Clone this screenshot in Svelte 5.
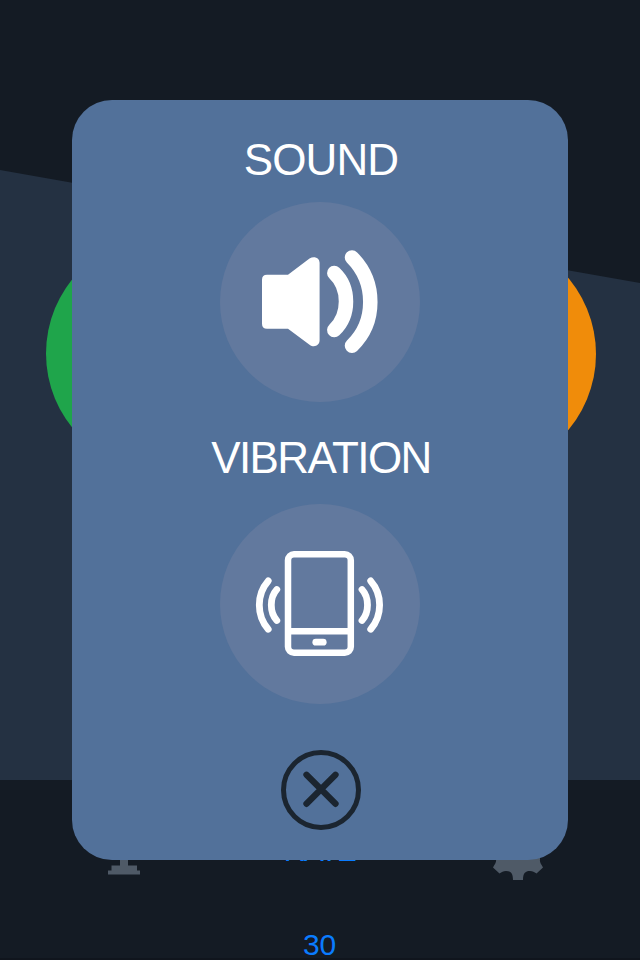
<script>
  let sound = $state(true);
  let vibration = $state(true);
  let score = 30;
</script>

<main class="screen">
  <svg class="scene" viewBox="0 0 640 960" aria-hidden="true">
    <path d="M0 170 L640 283 V780 H0 Z" fill="#243142" />
    <circle cx="164" cy="353.5" r="118" fill="#1fa54b" />
    <circle cx="477.5" cy="354" r="118.5" fill="#f08c0a" />
    <rect x="0" y="958" width="640" height="2" fill="#10151d" />
  </svg>

  <footer class="bar">
    <svg class="podium" viewBox="0 0 32 35" fill="#4f5a67" aria-hidden="true">
      <path d="M12 0H20V25.500H29V30.500H32V34.500H0V30.500H3.500V25.500H12Z" />
    </svg>
    <div class="links">
      <span class="rate">RATE</span>
      <span class="score">{score}</span>
    </div>
    <svg class="gear" viewBox="0 0 50 50" fill="#4f5a67" aria-hidden="true">
      <path d="M20 50C20 43.500 18 41 13 41C10 41 9 42 6.500 43.500L0 37.500C2 34 3.500 32.500 3 29.500V20H47V29.500C46.500 32.500 48 34 50 37.500L43.500 43.500C41 42 40 41 37 41C32 41 30 43.500 30 50Z" />
    </svg>
  </footer>

  <section class="modal">
    <h2 class="sound-title">SOUND</h2>
    <button class="toggle" aria-label="Toggle sound" aria-pressed={sound} onclick={() => (sound = !sound)}>
      <svg viewBox="0 0 200 200" fill="none" stroke="#fff" stroke-linecap="round">
        <path fill="#fff" stroke="none" d="M47 72.800H68L89.500 56.600C94 53.500 99.600 55.800 99.600 60.800V138.300C99.600 143.600 94 146 89.500 142.700L68 126.700H47Q42 126.700 42 121.700V77.800Q42 72.800 47 72.800Z" />
        <path stroke-width="14.500" d="M114.300 71Q126 82 126 99.500T114.300 128" />
        <path stroke-width="14.500" d="M132 55.500Q150.300 74 150.300 100T132 143.700" />
      </svg>
    </button>
    <h2 class="vibration-title">VIBRATION</h2>
    <button class="toggle" aria-label="Toggle vibration" aria-pressed={vibration} onclick={() => (vibration = !vibration)}>
      <svg viewBox="0 0 200 200" fill="none" stroke="#fff" stroke-linecap="round">
        <rect x="68" y="50.200" width="62.800" height="98.600" rx="6" stroke-width="6.500" />
        <path stroke-width="6.500" stroke-linecap="butt" d="M68 127.300H131" />
        <path stroke-width="6.800" d="M95.800 138.200H103.200" />
        <path stroke-width="6.800" d="M56.800 85.500Q51.300 91.500 51.300 101T56.800 116.500M48.200 76.900Q39.300 87 39.300 101T48.200 125.200M142 85.500Q147.500 91.500 147.500 101T142 116.500M150.700 76.900Q159.600 87 159.600 101T150.700 125.200" />
      </svg>
    </button>
    <button class="close" aria-label="Close">
      <svg viewBox="0 0 80 80" fill="none" stroke="#1b2530">
        <circle cx="40" cy="40" r="37.500" stroke-width="5" />
        <path d="M25.500 24.800L54.500 53.800M54.500 24.800L25.500 53.800" stroke-width="6.300" stroke-linecap="round" />
      </svg>
    </button>
  </section>
</main>

<style>
  :global(body) { margin: 0; background: #141b24; }
  .screen {
    position: relative;
    width: 640px;
    height: 960px;
    overflow: hidden;
    display: flex;
    flex-direction: column;
    justify-content: flex-end;
    background: #141b24;
    font-family: "Liberation Sans", Arial, sans-serif;
  }
  .scene { position: absolute; inset: 0; width: 640px; height: 960px; }
  .bar {
    position: relative;
    display: flex;
    align-items: flex-start;
    justify-content: space-between;
    box-sizing: border-box;
    height: 130px;
    padding: 0 97px 0 108px;
    color: #0a7cff;
    font-size: 30px;
    line-height: 36px;
  }
  .podium { width: 32px; height: 35px; margin-top: 10px; }
  .gear { width: 50px; height: 50px; }
  .links { display: flex; flex-direction: column; align-items: center; padding-top: 3px; gap: 58px; margin-left: 6px; }
  .rate { letter-spacing: -1.6px; }
  .score { letter-spacing: -0.3px; }
  .modal {
    position: absolute;
    inset: 100px 72px;
    border-radius: 40px;
    background: #52719a;
    display: flex;
    flex-direction: column;
    align-items: center;
  }
  h2 { margin: 0; color: #fff; font-size: 44px; line-height: 50px; font-weight: 400; }
  .sound-title { padding: 35px 0 0 2px; margin-bottom: 17px; letter-spacing: -0.9px; }
  .vibration-title { padding: 31px 0 0 2px; margin-bottom: 21px; letter-spacing: -1.6px; }
  button { display: block; padding: 0; border: 0; border-radius: 50%; background: none; cursor: pointer; }
  button svg { display: block; width: 100%; height: 100%; }
  .toggle { width: 200px; height: 200px; flex: none; background: #62799e; }
  .close { width: 80px; height: 80px; margin: 46px 0 0 2px; }
</style>
